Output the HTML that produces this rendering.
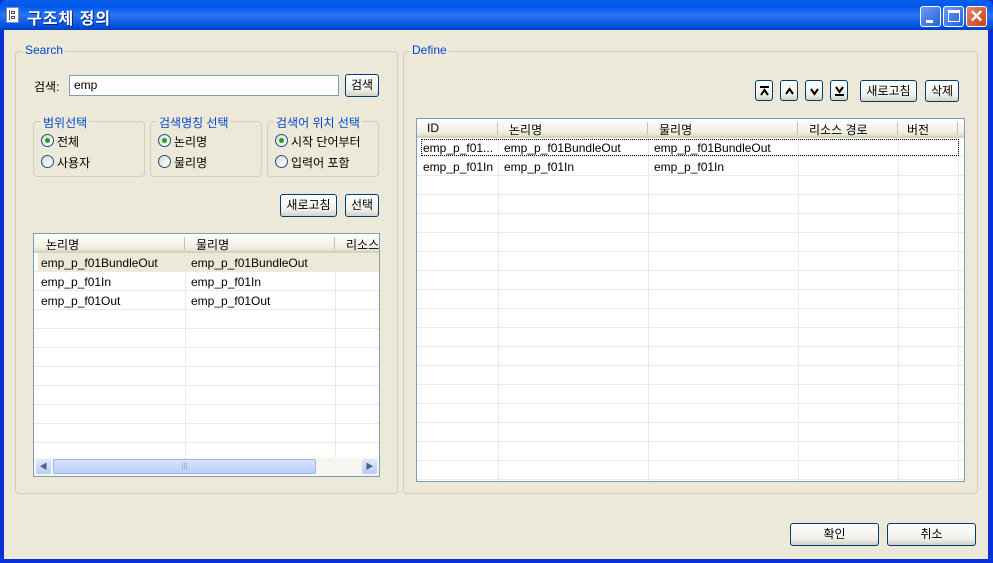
<!DOCTYPE html>
<html><head><meta charset="utf-8"><style>
*{margin:0;padding:0;box-sizing:border-box}
body{width:993px;height:563px;overflow:hidden;background:#0831d9;font-family:"Liberation Sans","Noto Sans CJK KR","NanumGothic",sans-serif;font-size:12px;color:#000;position:relative}
.a{position:absolute}
#title{left:0;top:0;width:993px;height:30px;background:linear-gradient(#0a5fe6,#0058ee 20%,#2a74f0 50%,#0054e3 85%,#0040c0);border-radius:7px 7px 0 0}
#ttext{left:27px;top:5px;color:#fff;font-size:16px;font-weight:bold;text-shadow:1px 1px #0a1f80;letter-spacing:1px}
#client{left:4px;top:30px;width:984px;height:529px;background:#ece9d8}
.grp{border:1px solid #d0d0bf;border-radius:4px}
.lg{background:#ece9d8;color:#0046d5;padding:0 2px;font-size:12px}
.btn{border:1px solid #003c74;border-radius:3px;background:linear-gradient(#fff,#f0f0ea 70%,#d6d0c5);text-align:center;font-size:12px;line-height:20px}
.btn svg{position:absolute;left:4px;top:5px}
.rad{width:13px;height:13px;border:1px solid #1c5180;border-radius:50%;background:linear-gradient(135deg,#dcdcd7,#fff)}
.rad.on::after{content:"";position:absolute;left:3px;top:3px;width:5px;height:5px;border-radius:50%;background:#21a121}
.tbl{border:1px solid #7f9db9;background:#fff;overflow:hidden}
.hdr{background:linear-gradient(#fff,#f1efe2 80%,#e2decd);height:19px;border-bottom:2px solid #d6d2c2}
.hs{width:1px;height:13px;top:3px;background:#c7c5b2}
.cl{width:1px;background:#edebe0}
.rw{background:repeating-linear-gradient(#fff 0 18px,#edebe0 18px 19px)}
.t{white-space:nowrap}
</style></head><body>
<div id="title" class="a"></div>
<div class="a" style="left:6px;top:7px;width:13px;height:16px;background:#fff;border:1px solid #6f8fbf"><div class="a" style="left:2px;top:2px;width:3px;height:10px;border-left:1px solid #555"></div><div class="a" style="left:4px;top:3px;width:4px;height:3px;border:1px solid #555"></div><div class="a" style="left:4px;top:8px;width:4px;height:3px;border:1px solid #555"></div></div>
<div id="ttext" class="a">구조체 정의</div>
<div class="a" style="left:920px;top:6px;width:21px;height:21px;border:1px solid #fff;border-radius:3px;background:linear-gradient(135deg,#6c9cf5,#2561d9)"><div class="a" style="left:5px;top:13px;width:7px;height:3px;background:#fff"></div></div>
<div class="a" style="left:943px;top:6px;width:21px;height:21px;border:1px solid #fff;border-radius:3px;background:linear-gradient(135deg,#6c9cf5,#2561d9)"><div class="a" style="left:4px;top:3px;width:12px;height:12px;border:1px solid #fff;border-top-width:3px"></div></div>
<div class="a" style="left:966px;top:6px;width:21px;height:21px;border:1px solid #fff;border-radius:3px;background:linear-gradient(135deg,#e6876a,#c8401a);color:#fff;font-size:17px;font-weight:bold;text-align:center;line-height:19px">✕</div>
<div id="client" class="a"></div>

<div class="a grp" style="left:15px;top:51px;width:383px;height:443px"></div>
<div class="a lg" style="left:23px;top:43px">Search</div>
<div class="a" style="left:34px;top:78px">검색:</div>
<div class="a" style="left:69px;top:75px;width:270px;height:21px;border:1px solid #7f9db9;background:#fff;padding:2px 4px">emp</div>
<div class="a btn" style="left:345px;top:74px;width:34px;height:23px">검색</div>

<div class="a grp" style="left:33px;top:121px;width:112px;height:56px"></div>
<div class="a lg" style="left:41px;top:114px">범위선택</div>
<div class="a rad on" style="left:41px;top:134px"></div><div class="a" style="left:57px;top:133px">전체</div>
<div class="a rad" style="left:41px;top:155px"></div><div class="a" style="left:57px;top:154px">사용자</div>

<div class="a grp" style="left:150px;top:121px;width:112px;height:56px"></div>
<div class="a lg" style="left:157px;top:114px">검색명칭 선택</div>
<div class="a rad on" style="left:158px;top:134px"></div><div class="a" style="left:174px;top:133px">논리명</div>
<div class="a rad" style="left:158px;top:155px"></div><div class="a" style="left:174px;top:154px">물리명</div>

<div class="a grp" style="left:267px;top:121px;width:112px;height:56px"></div>
<div class="a lg" style="left:274px;top:114px">검색어 위치 선택</div>
<div class="a rad on" style="left:275px;top:134px"></div><div class="a" style="left:291px;top:133px">시작 단어부터</div>
<div class="a rad" style="left:275px;top:155px"></div><div class="a" style="left:291px;top:154px">입력어 포함</div>

<div class="a btn" style="left:280px;top:194px;width:57px;height:23px">새로고침</div>
<div class="a btn" style="left:345px;top:194px;width:34px;height:23px">선택</div>

<div class="a tbl" style="left:33px;top:233px;width:347px;height:244px">
 <div class="a hdr" style="left:0;top:0;width:347px"></div>
 <div class="a hs" style="left:150px"></div><div class="a hs" style="left:300px"></div>
 <div class="a t" style="left:12px;top:2px">논리명</div><div class="a t" style="left:162px;top:2px">물리명</div><div class="a t" style="left:312px;top:2px">리소스</div>
 <div class="a rw" style="left:0;top:19px;width:347px;height:205px"></div>
 <div class="a" style="left:4px;top:19px;width:343px;height:18px;background:#ece9d8"></div>
 <div class="a cl" style="left:151px;top:37px;height:187px"></div><div class="a cl" style="left:301px;top:37px;height:187px"></div>
 <div class="a t" style="left:7px;top:22px">emp_p_f01BundleOut</div><div class="a t" style="left:157px;top:22px">emp_p_f01BundleOut</div>
 <div class="a t" style="left:7px;top:41px">emp_p_f01In</div><div class="a t" style="left:157px;top:41px">emp_p_f01In</div>
 <div class="a t" style="left:7px;top:60px">emp_p_f01Out</div><div class="a t" style="left:157px;top:60px">emp_p_f01Out</div>
 <div class="a" style="left:0;top:224px;width:347px;height:18px;background:#f6f5f0"></div>
 <div class="a" style="left:2px;top:225px;width:15px;height:15px;border-radius:2px;background:linear-gradient(#e0eafd,#b7cdf7);font-size:8px;color:#4d6185;text-align:center;line-height:15px">◀</div>
 <div class="a" style="left:19px;top:225px;width:263px;height:15px;border:1px solid #9db6e8;border-radius:2px;background:linear-gradient(#d6e4fd,#b9cffb);font-size:7px;color:#8aa;text-align:center;line-height:13px">|||</div>
 <div class="a" style="left:328px;top:225px;width:15px;height:15px;border-radius:2px;background:linear-gradient(#e0eafd,#b7cdf7);font-size:8px;color:#4d6185;text-align:center;line-height:15px">▶</div>
</div>

<div class="a grp" style="left:403px;top:51px;width:575px;height:443px"></div>
<div class="a lg" style="left:410px;top:43px">Define</div>
<div class="a btn" style="left:755px;top:80px;width:18px;height:21px"><svg width="9" height="10" viewBox="0 0 9 10"><path d="M0 1H9" stroke="#000" stroke-width="2"/><path d="M1 9L4.5 4L8 9" stroke="#000" stroke-width="2" fill="none"/></svg></div>
<div class="a btn" style="left:780px;top:80px;width:18px;height:21px"><svg width="9" height="10" viewBox="0 0 9 10"><path d="M1 8L4.5 3L8 8" stroke="#000" stroke-width="2" fill="none"/></svg></div>
<div class="a btn" style="left:805px;top:80px;width:18px;height:21px"><svg width="9" height="10" viewBox="0 0 9 10"><path d="M1 3L4.5 8L8 3" stroke="#000" stroke-width="2" fill="none"/></svg></div>
<div class="a btn" style="left:830px;top:80px;width:18px;height:21px"><svg width="9" height="10" viewBox="0 0 9 10"><path d="M1 1L4.5 6L8 1" stroke="#000" stroke-width="2" fill="none"/><path d="M0 9H9" stroke="#000" stroke-width="2"/></svg></div>
<div class="a btn" style="left:860px;top:80px;width:57px;height:22px">새로고침</div>
<div class="a btn" style="left:925px;top:80px;width:34px;height:22px">삭제</div>

<div class="a tbl" style="left:416px;top:118px;width:549px;height:364px">
 <div class="a hdr" style="left:0;top:0;width:549px"></div>
 <div class="a hs" style="left:80px"></div><div class="a hs" style="left:230px"></div><div class="a hs" style="left:380px"></div><div class="a hs" style="left:480px"></div><div class="a hs" style="left:540px"></div>
 <div class="a t" style="left:10px;top:2px">ID</div><div class="a t" style="left:92px;top:2px">논리명</div><div class="a t" style="left:242px;top:2px">물리명</div><div class="a t" style="left:392px;top:2px">리소스 경로</div><div class="a t" style="left:490px;top:2px">버전</div>
 <div class="a rw" style="left:0;top:19px;width:549px;height:345px"></div>
 <div class="a cl" style="left:81px;top:19px;height:345px"></div><div class="a cl" style="left:231px;top:19px;height:345px"></div><div class="a cl" style="left:381px;top:19px;height:345px"></div><div class="a cl" style="left:481px;top:19px;height:345px"></div><div class="a cl" style="left:541px;top:19px;height:345px"></div>
 <div class="a" style="left:4px;top:20px;width:538px;height:17px;border:1px dotted #000"></div>
 <div class="a t" style="left:6px;top:22px">emp_p_f01...</div><div class="a t" style="left:87px;top:22px">emp_p_f01BundleOut</div><div class="a t" style="left:237px;top:22px">emp_p_f01BundleOut</div>
 <div class="a t" style="left:6px;top:41px">emp_p_f01In</div><div class="a t" style="left:87px;top:41px">emp_p_f01In</div><div class="a t" style="left:237px;top:41px">emp_p_f01In</div>
</div>

<div class="a btn" style="left:790px;top:523px;width:89px;height:23px">확인</div>
<div class="a btn" style="left:887px;top:523px;width:89px;height:23px">취소</div>
</body></html>
